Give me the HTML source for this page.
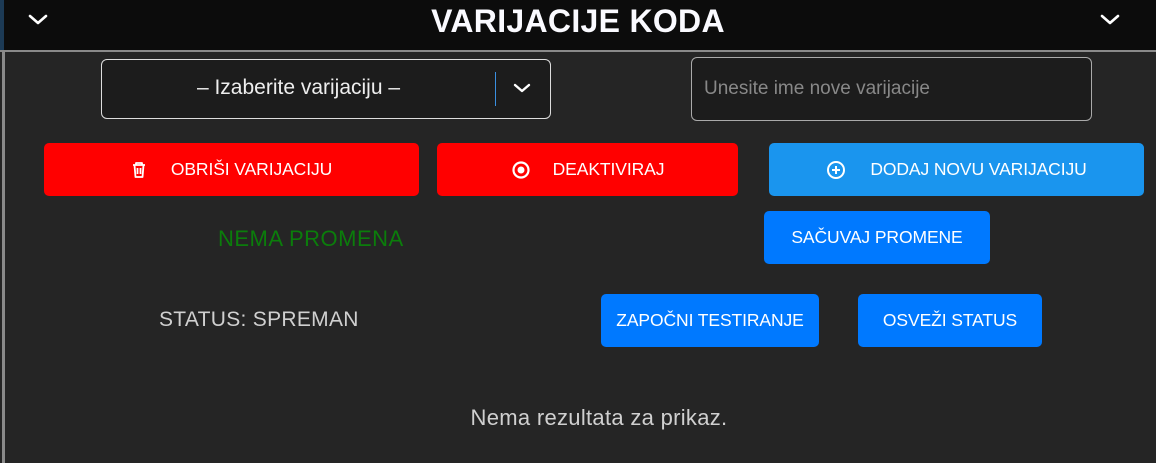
<!DOCTYPE html>
<html><head><meta charset="utf-8"><style>
*{margin:0;padding:0;box-sizing:border-box}
body{width:1156px;height:463px;background:#252525;font-family:"Liberation Sans",sans-serif;position:relative;overflow:hidden;color:#fff}
.hdr{position:absolute;left:0;top:0;width:1156px;height:50px;background:#0c0c0c}
.hdr .l{position:absolute;left:0;top:0;width:4px;height:50px;background:#1c3a55}
.line{position:absolute;left:0;top:50px;width:1156px;height:2px;background:#8a8a8a}
.lb{position:absolute;left:2px;top:50px;width:3px;height:413px;background:#8a8a8a}
.title{position:absolute;left:0;width:1156px;top:3px;text-align:center;font-weight:bold;font-size:32px;letter-spacing:0.3px;color:#fafaff}
.abs{position:absolute}
.btn{position:absolute;border-radius:5px;display:flex;align-items:center;justify-content:center;font-size:17.5px;color:#fff;letter-spacing:-0.1px}
.t{position:absolute;white-space:nowrap}
</style></head><body>
<div class="hdr"><div class="l"></div></div>
<div class="line"></div><div class="lb"></div>
<div class="title">VARIJACIJE KODA</div>
<svg class="abs" style="left:26px;top:11px" width="24" height="16" viewBox="0 0 24 16"><path d="M4 5l8 7 8-7" stroke="#fff" stroke-width="2.6" fill="none" stroke-linecap="round" stroke-linejoin="round"/></svg>
<svg class="abs" style="left:1098px;top:11px" width="24" height="16" viewBox="0 0 24 16"><path d="M4 5l8 7 8-7" stroke="#fff" stroke-width="2.6" fill="none" stroke-linecap="round" stroke-linejoin="round"/></svg>

<div class="abs" style="left:101px;top:59px;width:450px;height:60px;border:1px solid #ddd;border-radius:6px;background:#1c1c1c"></div>
<div class="t" style="left:101px;width:395px;top:76px;text-align:center;font-size:21px;color:#eee">– Izaberite varijaciju –</div>
<div class="abs" style="left:495px;top:72px;width:1px;height:34px;background:#3a8fe0"></div>
<svg class="abs" style="left:512px;top:81px" width="20" height="14" viewBox="0 0 20 14"><path d="M3 4l7 6 7-6" stroke="#fff" stroke-width="2.4" fill="none" stroke-linecap="round" stroke-linejoin="round"/></svg>

<div class="abs" style="left:691px;top:57px;width:401px;height:64px;border:1px solid #aaa;border-radius:6px;background:#1c1c1c"></div>
<div class="t" style="left:704px;top:78px;font-size:19px;color:#888">Unesite ime nove varijacije</div>

<div class="btn" style="left:44px;top:143px;width:375px;height:53px;background:#ff0000">
<svg width="16" height="20" viewBox="0 0 16 20" style="margin-right:24px"><path d="M2 5h12M5 5V3h6v2M3.5 5l1 12h7l1-12M6.5 8v6M9.5 8v6" stroke="#fff" stroke-width="1.8" fill="none" stroke-linejoin="round"/></svg>OBRIŠI VARIJACIJU</div>
<div class="btn" style="left:437px;top:143px;width:301px;height:53px;background:#ff0000">
<svg width="20" height="20" viewBox="0 0 20 20" style="margin-right:22px"><circle cx="10" cy="10" r="7.5" stroke="#fff" stroke-width="2.2" fill="none"/><circle cx="10" cy="10" r="3.5" fill="#fff"/></svg>DEAKTIVIRAJ</div>
<div class="btn" style="left:769px;top:143px;width:375px;height:53px;background:#1a95ee">
<svg width="20" height="20" viewBox="0 0 20 20" style="margin-right:24px"><circle cx="10" cy="10" r="8" stroke="#fff" stroke-width="2" fill="none"/><path d="M10 6v8M6 10h8" stroke="#fff" stroke-width="2"/></svg>DODAJ NOVU VARIJACIJU</div>

<div class="t" style="left:218px;top:226px;font-size:22px;letter-spacing:0.5px;color:#0b7d0b">NEMA PROMENA</div>
<div class="btn" style="left:764px;top:211px;width:226px;height:53px;background:#0079ff">SAČUVAJ PROMENE</div>

<div class="t" style="left:159px;top:308px;font-size:21px;letter-spacing:0.3px;color:#d0d0d0">STATUS: SPREMAN</div>
<div class="btn" style="left:601px;top:294px;width:218px;height:53px;background:#0079ff">ZAPOČNI TESTIRANJE</div>
<div class="btn" style="left:858px;top:294px;width:184px;height:53px;background:#0079ff">OSVEŽI STATUS</div>

<div class="t" style="left:0;width:1198px;top:405px;text-align:center;font-size:22px;letter-spacing:0.3px;color:#d0d0d0">Nema rezultata za prikaz.</div>
</body></html>
